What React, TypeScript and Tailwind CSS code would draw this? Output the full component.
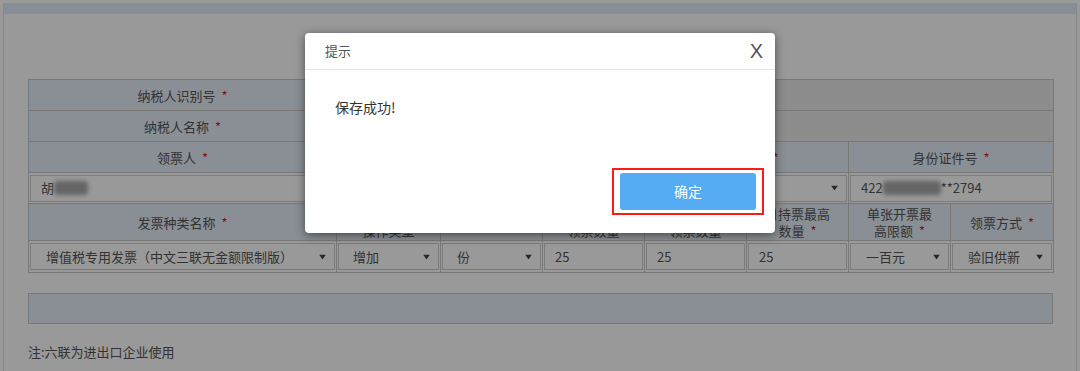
import React from "react";

const font = { fontFamily: '"Noto Sans CJK SC", "Liberation Sans", sans-serif' };

function Star() {
  return <span className="ml-[6px] text-[#e02020]">*</span>;
}

function Arrow() {
  return (
    <svg className="absolute right-[8px] top-1/2 -translate-y-1/2" width="7" height="5" viewBox="0 0 7 5">
      <path d="M0 0 L7 0 L3.5 5 Z" fill="#444" />
    </svg>
  );
}

function Head({ children, span = 1 }: { children: React.ReactNode; span?: number }) {
  return (
    <td
      colSpan={span}
      className="border border-[#c8c8c8] bg-[#e4eef9] px-3 py-0 text-center text-[13px] leading-[17px] text-[#555]"
    >
      {children}
    </td>
  );
}

function Field({
  children,
  span = 1,
  select = false,
  pl = "pl-[10px]",
}: {
  children?: React.ReactNode;
  span?: number;
  select?: boolean;
  pl?: string;
}) {
  return (
    <td colSpan={span} className="border border-[#c8c8c8] p-[1px]">
      <div
        className={`relative flex h-[27px] items-center border border-[#cfcfcf] bg-white text-[13px] text-[#555] ${pl}`}
      >
        {children}
        {select && <Arrow />}
      </div>
    </td>
  );
}

function Blur({ w }: { w: string }) {
  return <span className={`inline-block h-[14px] rounded-sm bg-[#a8a8a8] blur-[2px] ${w}`} />;
}

export default function App() {
  return (
    <div className="relative h-[371px] w-full overflow-hidden bg-white" style={font}>
      <div className="mx-[3px] mt-[3px] h-[400px] border-x border-[#e2e2e2]">
        <div className="h-[11px] bg-[#e2edf8]" />
        <div className="pl-[24px] pt-[65px]">
          <table className="w-[1025px] table-fixed border-collapse">
            <colgroup>
              <col className="w-[308px]" />
              <col className="w-[104px]" />
              <col className="w-[102px]" />
              <col className="w-[102px]" />
              <col className="w-[102px]" />
              <col className="w-[102px]" />
              <col className="w-[102px]" />
              <col className="w-[103px]" />
            </colgroup>
            <tbody>
              <tr className="h-[31px]">
                <Head>
                  纳税人识别号
                  <Star />
                </Head>
                <td colSpan={7} className="border border-[#c8c8c8] bg-[#ebebeb]" />
              </tr>
              <tr className="h-[31px]">
                <Head>
                  纳税人名称
                  <Star />
                </Head>
                <td colSpan={7} className="border border-[#c8c8c8] bg-[#ebebeb]" />
              </tr>
              <tr className="h-[31px]">
                <Head>
                  领票人
                  <Star />
                </Head>
                <Head span={3}>
                  手机号码
                  <Star />
                </Head>
                <Head span={2}>
                  证件类型
                  <Star />
                </Head>
                <Head span={2}>
                  身份证件号
                  <Star />
                </Head>
              </tr>
              <tr className="h-[31px]">
                <Field>
                  胡
                  <Blur w="w-[34px]" />
                </Field>
                <Field span={3} />
                <Field span={2} select />
                <Field span={2}>
                  422
                  <Blur w="w-[58px]" />
                  **2794
                </Field>
              </tr>
              <tr className="h-[37px]">
                <Head>
                  发票种类名称
                  <Star />
                </Head>
                <Head>
                  发票
                  <br />
                  操作类型
                </Head>
                <Head>
                  单位
                  <Star />
                </Head>
                <Head>
                  每次最高
                  <br />
                  领票数量
                </Head>
                <Head>
                  本次申请
                  <br />
                  领票数量
                </Head>
                <Head>
                  月持票最高
                  <br />
                  数量
                  <Star />
                </Head>
                <Head>
                  单张开票最
                  <br />
                  高限额
                  <Star />
                </Head>
                <Head>
                  领票方式
                  <Star />
                </Head>
              </tr>
              <tr className="h-[32px]">
                <Field select pl="pl-[15px]">
                  增值税专用发票（中文三联无金额限制版）
                </Field>
                <Field select pl="pl-[14px]">
                  增加
                </Field>
                <Field select pl="pl-[14px]">
                  份
                </Field>
                <Field>25</Field>
                <Field>25</Field>
                <Field>25</Field>
                <Field select pl="pl-[15px]">
                  一百元
                </Field>
                <Field select pl="pl-[15px]">
                  验旧供新
                </Field>
              </tr>
            </tbody>
          </table>
          <div className="mt-[20px] h-[31px] w-[1025px] border border-[#c8c8c8] bg-[#e4eef9]" />
          <p className="mt-[19px] text-[13px] leading-[18px] text-[#555]">注:六联为进出口企业使用</p>
        </div>
      </div>

      <div className="absolute inset-0 bg-black/40" />

      <div className="absolute left-[305px] top-[33px] flex h-[200px] w-[470px] flex-col rounded-[4px] bg-white shadow-[0_2px_10px_rgba(0,0,0,0.5)]">
        <div className="flex h-[37px] items-center justify-between border-b border-[#e5e5e5] pl-[20px] pr-[12px]">
          <span className="text-[13px] text-[#555]">提示</span>
          <span className="text-[20px] font-light leading-none text-[#555]" style={{ fontFamily: '"Liberation Sans", sans-serif' }}>
            X
          </span>
        </div>
        <div className="flex-1 pl-[30px] pt-[27px] text-[14px] text-[#333]">保存成功!</div>
        <div className="flex justify-end pb-[18px] pr-[11px]">
          <div className="border-2 border-[#ff1a1a] px-[6px] py-[3px]">
            <button
              type="button"
              className="h-[37px] w-[136px] rounded-[3px] bg-[#55acf2] text-[14px] text-white"
            >
              确定
            </button>
          </div>
        </div>
      </div>
    </div>
  );
}
